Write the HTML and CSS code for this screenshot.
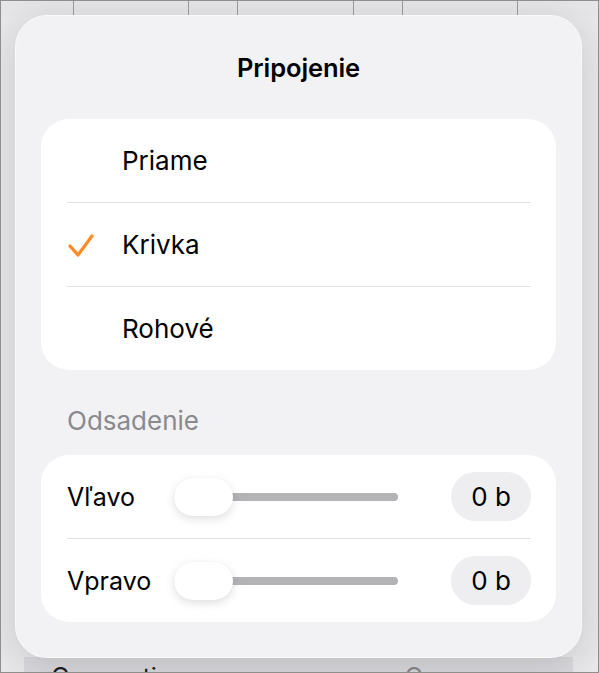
FILE: index.html
```html
<!DOCTYPE html>
<html lang="sk">
<head>
  <meta charset="UTF-8">
  <meta name="viewport" content="width=device-width, initial-scale=1.0">
  <title>Pripojenie</title>
  <link rel="stylesheet" href="styles.css">
</head>
<body>
  <div class="screen">
    <div class="cols">
      <span></span><span></span><span></span><span></span><span></span><span></span><span></span>
    </div>
    <div class="under"></div>
    <div class="peek">
      <span>Connection</span>
      <span class="peek-value">Open <span class="chev">›</span></span>
    </div>

    <div class="popover">
      <h1 class="title">Pripojenie</h1>

      <div class="card">
        <div class="option">Priame</div>
        <div class="option checked">
          <svg class="check" width="26" height="24" viewBox="0 0 26 24">
            <polyline points="2,12 10,21 24,2" fill="none" stroke="#fd8a26" stroke-width="3.2" stroke-linecap="round" stroke-linejoin="round"/>
          </svg>
          Krivka
        </div>
        <div class="option">Rohové</div>
      </div>

      <div class="section">Odsadenie</div>

      <div class="card">
        <div class="slider-row">
          <span class="label">Vľavo</span>
          <div class="slider"><div class="thumb"></div></div>
          <span class="pill">0 b</span>
        </div>
        <div class="slider-row">
          <span class="label">Vpravo</span>
          <div class="slider"><div class="thumb"></div></div>
          <span class="pill">0 b</span>
        </div>
      </div>
    </div>
  </div>
</body>
</html>
```

FILE: styles.css
```css
* { box-sizing: border-box; }

body {
  margin: 0;
  font-family: Inter, "Noto Sans", sans-serif;
  color: #000;
}

.screen {
  position: relative;
  width: 599px;
  height: 673px;
  border: 1px solid #8e8e90;
  background: #e9e9ec;
  overflow: hidden;
  display: flex;
  flex-direction: column;
}

.cols {
  height: 15px;
  flex-shrink: 0;
  display: grid;
  grid-template-columns: 72px 115px 49px 116px 49px 115px 1fr;
  background: #e6e6e9;
}

.cols span { border-left: 1px solid #9c9ca0; }
.cols span:first-child { border-left: none; }

.under {
  height: 641px;
  flex-shrink: 0;
  background: #e8e8eb;
}

.peek {
  margin: 0 25px 0 23px;
  flex: 1;
  min-height: 0;
  overflow: hidden;
  background: #dadade;
  display: flex;
  justify-content: space-between;
  padding: 5px 36px 0 27px;
  font-size: 25px;
  line-height: 30px;
  color: #1c1c1e;
}

.peek-value { color: #8a8a8e; }
.chev { margin-left: 52px; color: #b0b0b4; }

.popover {
  position: absolute;
  left: 14px;
  top: 14px;
  width: 567px;
  height: 643px;
  background: #f2f2f4;
  border: 1px solid #fafafb;
  border-radius: 32px;
  box-shadow: 0 8px 40px rgba(0, 0, 0, 0.14);
  padding: 0 25px;
}

.title {
  margin: 0;
  height: 103px;
  display: flex;
  align-items: center;
  justify-content: center;
  font-size: 25.5px;
  font-weight: 600;
  letter-spacing: -0.1px;
}

.card {
  background: #fff;
  border-radius: 28px;
  padding: 0 25px 0 26px;
}

.option {
  height: 84px;
  display: flex;
  align-items: center;
  padding-left: 55px;
  font-size: 26px;
  border-top: 1px solid #e2e2e4;
  position: relative;
}

.option:first-child { border-top: none; height: 83px; }

.check {
  position: absolute;
  left: 1px;
  top: 31px;
}

.section {
  height: 85px;
  display: flex;
  align-items: center;
  padding: 15px 0 0 26px;
  font-size: 26px;
  color: #8a8a8e;
}

.slider-row {
  height: 84px;
  display: flex;
  align-items: center;
  border-top: 1px solid #e2e2e4;
}

.slider-row:first-child { border-top: none; height: 83px; }

.label {
  width: 107px;
  font-size: 25px;
}

.slider {
  width: 224px;
  height: 8px;
  border-radius: 4px;
  background: #b3b3b6;
  position: relative;
}

.thumb {
  position: absolute;
  left: 0;
  top: -15px;
  width: 59px;
  height: 38px;
  border-radius: 19px;
  background: #fff;
  box-shadow: 0 3px 10px rgba(0, 0, 0, 0.13), 0 0 1px rgba(0, 0, 0, 0.06);
}

.pill {
  margin-left: auto;
  width: 80px;
  height: 49px;
  border-radius: 25px;
  background: #eeeef0;
  display: flex;
  align-items: center;
  justify-content: center;
  font-size: 26px;
}
```
